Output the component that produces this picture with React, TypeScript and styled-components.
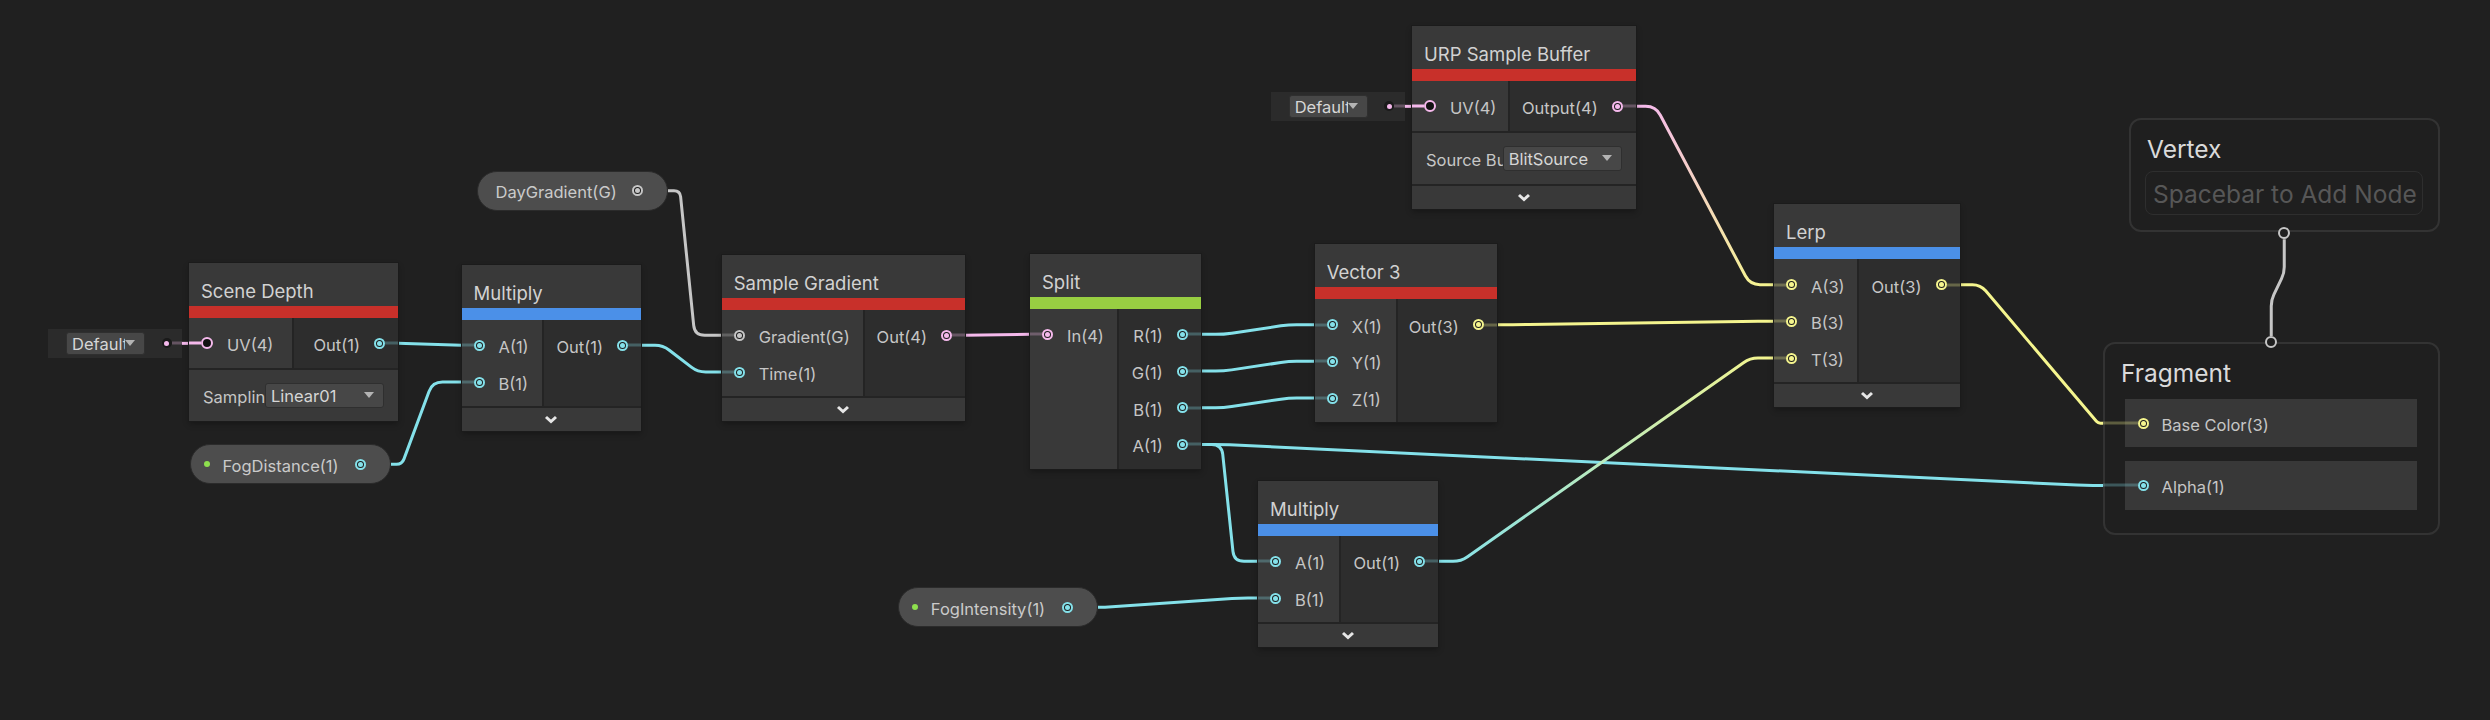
import React from "react";
import styled, { createGlobalStyle } from "styled-components";

const COL = {
  bg: "#202020",
  node: "#393939",
  out: "#2d2d2d",
  seam: "#242424",
  text: "#c6c6c6",
  title: "#d2d2d2",
  red: "#c8302a",
  blue: "#4b90e8",
  green: "#98cf42",
  cyan: "#84e1ea",
  yellow: "#f5f58e",
  pink: "#f5b9ec",
  grey: "#c6c6c6",
};

const dim = (c: string) => c + "4a";

type Pt = [number, number];
type Port = { label: string; color: string; hollow?: boolean; stub?: string };
type NodeDef = {
  x: number;
  y: number;
  w: number;
  inW: number;
  title: string;
  bar: string;
  inputs: Port[];
  outputs: Port[];
  prop?: { label: string; value: string };
  chevron?: boolean;
};

const TITLE_H = 43;
const BAR_H = 12;
const PAD_T = 7;
const ROW_H = 36.7;

const GlobalStyle = createGlobalStyle`
  html, body { margin: 0; padding: 0; background: ${COL.bg}; }
  body { font-family: Inter, "Noto Sans", "Liberation Sans", sans-serif; }
  #root { width: 2490px; height: 720px; }
`;

const Canvas = styled.div`
  position: relative;
  width: 2490px;
  height: 720px;
  overflow: hidden;
  background: ${COL.bg};
`;

const WireLayer = styled.svg`
  position: absolute;
  left: 0;
  top: 0;
  width: 2490px;
  height: 720px;
`;

const NodeFrame = styled.div<{ $x: number; $y: number; $w: number }>`
  position: absolute;
  left: ${(p) => p.$x}px;
  top: ${(p) => p.$y}px;
  width: ${(p) => p.$w}px;
  display: flex;
  flex-direction: column;
  background: ${COL.node};
  box-shadow: 0 0 0 1px #1b1b1b, 0 3px 6px rgba(0, 0, 0, 0.3);
`;

const TitleBar = styled.div`
  height: ${TITLE_H}px;
  box-sizing: border-box;
  padding: 17px 12px 0;
  font-size: 18.5px;
  line-height: 22px;
  color: ${COL.title};
  white-space: nowrap;
  overflow: hidden;
`;

const CategoryStrip = styled.div<{ $c: string }>`
  height: ${BAR_H}px;
  background: ${(p) => p.$c};
`;

const PortGrid = styled.div<{ $inW: number }>`
  display: grid;
  grid-template-columns: ${(p) => p.$inW}px 1fr;
  column-gap: 2px;
  background: ${COL.seam};
`;

const PortColumn = styled.div<{ $out?: boolean }>`
  display: flex;
  flex-direction: column;
  padding: ${PAD_T}px 0 6px;
  background: ${(p) => (p.$out ? COL.out : COL.node)};
`;

const PortRow = styled.div<{ $out?: boolean }>`
  position: relative;
  height: ${ROW_H}px;
  display: flex;
  align-items: center;
  gap: 14px;
  flex-direction: ${(p) => (p.$out ? "row-reverse" : "row")};
  padding: ${(p) => (p.$out ? "0 13px 0 0" : "0 0 0 12px")};
`;

const Socket = styled.span<{ $c: string; $hollow?: boolean }>`
  position: relative;
  flex: none;
  width: ${(p) => (p.$hollow ? 12 : 11)}px;
  height: ${(p) => (p.$hollow ? 12 : 11)}px;
  box-sizing: border-box;
  border-radius: 50%;
  border: 2px solid ${(p) => p.$c};
  background: ${(p) => (p.$hollow ? "#121212" : "#1d1d1d")};
  display: flex;
  align-items: center;
  justify-content: center;
  &::after {
    content: "";
    width: 5px;
    height: 5px;
    border-radius: 50%;
    background: ${(p) => p.$c};
    display: ${(p) => (p.$hollow ? "none" : "block")};
  }
`;

const Stub = styled.span<{ $c: string; $out?: boolean; $len: number; $off?: number }>`
  position: absolute;
  top: 50%;
  height: 3px;
  transform: translateY(-50%);
  ${(p) => (p.$out ? `right: ${-(p.$off ?? 0)}px;` : `left: ${-(p.$off ?? 0)}px;`)}
  width: ${(p) => p.$len}px;
  background: ${(p) => p.$c};
`;

const PortLabel = styled.span`
  font-size: 16.5px;
  line-height: 20px;
  padding-top: 4px;
  color: ${COL.text};
  white-space: nowrap;
`;

const PropRow = styled.div`
  height: 53px;
  box-sizing: border-box;
  border-top: 2px solid ${COL.seam};
  background: ${COL.node};
  display: flex;
  align-items: center;
  padding: 0 14px;
`;

const PropLabel = styled.span`
  flex: 1;
  min-width: 0;
  overflow: hidden;
  white-space: nowrap;
  font-size: 16.5px;
  padding-top: 3px;
  color: ${COL.text};
`;

const Select = styled.div<{ $w: number; $h: number }>`
  flex: none;
  width: ${(p) => p.$w}px;
  height: ${(p) => p.$h}px;
  box-sizing: border-box;
  display: flex;
  align-items: center;
  padding: 0 9px 0 5px;
  background: #474747;
  border: 1px solid #2f2f2f;
  border-radius: 3px;
`;

const SelectText = styled.span`
  flex: 1;
  min-width: 0;
  overflow: hidden;
  white-space: nowrap;
  font-size: 16.5px;
  padding-top: 2px;
  color: #d6d6d6;
`;

const Caret = styled.span`
  flex: none;
  width: 0;
  height: 0;
  border-left: 5px solid transparent;
  border-right: 5px solid transparent;
  border-top: 6px solid #b4b4b4;
`;

const Expander = styled.div`
  height: 25px;
  box-sizing: border-box;
  border-top: 2px solid ${COL.seam};
  background: ${COL.node};
  display: flex;
  align-items: center;
  justify-content: center;
`;

const PropertyPill = styled.div<{ $x: number; $y: number; $w: number; $padL: number }>`
  position: absolute;
  left: ${(p) => p.$x}px;
  top: ${(p) => p.$y}px;
  width: ${(p) => p.$w}px;
  height: 40px;
  box-sizing: border-box;
  border-radius: 20px;
  background: #4d4d4d;
  border: 1px solid #2b2b2b;
  display: flex;
  align-items: center;
  padding: 0 24px 0 ${(p) => p.$padL}px;
`;

const KeywordDot = styled.span`
  flex: none;
  width: 6px;
  height: 6px;
  border-radius: 50%;
  background: #8ee04e;
  margin-right: 13px;
`;

const PillLabel = styled.span`
  font-size: 16.5px;
  padding-top: 3px;
  color: #cacaca;
  white-space: nowrap;
`;

const PillSocket = styled(Socket)`
  margin-left: auto;
`;

const InlineValue = styled.div<{ $x: number; $y: number; $w: number; $padL: number; $padR: number }>`
  position: absolute;
  left: ${(p) => p.$x}px;
  top: ${(p) => p.$y}px;
  width: ${(p) => p.$w}px;
  height: 29px;
  box-sizing: border-box;
  background: #2b2b2b;
  display: flex;
  align-items: center;
  padding: 0 ${(p) => p.$padR}px 0 ${(p) => p.$padL}px;
`;

const ValueDot = styled.span`
  position: relative;
  margin-left: auto;
  flex: none;
  width: 10px;
  height: 10px;
  border-radius: 50%;
  background: #1a1a1a;
  display: flex;
  align-items: center;
  justify-content: center;
  &::after {
    content: "";
    width: 5px;
    height: 5px;
    border-radius: 50%;
    background: ${COL.pink};
  }
`;

const ContextBlock = styled.div<{ $x: number; $y: number; $w: number }>`
  position: absolute;
  left: ${(p) => p.$x}px;
  top: ${(p) => p.$y}px;
  width: ${(p) => p.$w}px;
  box-sizing: border-box;
  border: 2px solid #333333;
  border-radius: 12px;
  background: #1f1f1f;
  display: flex;
  flex-direction: column;
`;

const ContextTitle = styled.div`
  padding: 14px 0 0 16px;
  font-size: 24.5px;
  line-height: 30px;
  color: #dadada;
`;

const Placeholder = styled.div`
  margin: 7px 15px 15px 14px;
  height: 44px;
  box-sizing: border-box;
  border: 1px solid #2e2e2e;
  border-radius: 8px;
  display: flex;
  align-items: center;
  padding: 2px 0 0 7px;
  font-size: 24.5px;
  color: #575757;
  white-space: nowrap;
  overflow: hidden;
`;

const SlotList = styled.div`
  display: flex;
  flex-direction: column;
  gap: 14px;
  padding: 11px 20.5px 23px 20px;
`;

const Slot = styled.div`
  position: relative;
  height: 48.3px;
  background: #383838;
  display: flex;
  align-items: center;
  gap: 13px;
  padding-left: 12.5px;
`;

const FlowPort = styled.span<{ $top?: boolean }>`
  position: absolute;
  left: 50%;
  ${(p) => (p.$top ? "top: -8px;" : "bottom: -9px;")}
  transform: translateX(-50%);
  width: 12px;
  height: 12px;
  box-sizing: border-box;
  border-radius: 50%;
  border: 2px solid ${COL.grey};
  background: #1f1f1f;
`;

const cyanPort = (label: string): Port => ({ label, color: COL.cyan });
const yellowPort = (label: string): Port => ({ label, color: COL.yellow });

const NODES: Record<string, NodeDef> = {
  scene: {
    x: 189, y: 263, w: 209, inW: 103, title: "Scene Depth", bar: COL.red,
    inputs: [{ label: "UV(4)", color: COL.pink, hollow: true, stub: COL.pink }],
    outputs: [cyanPort("Out(1)")],
    prop: { label: "Sampling", value: "Linear01" },
  },
  mul1: {
    x: 461.5, y: 265, w: 179.5, inW: 80.5, title: "Multiply", bar: COL.blue,
    inputs: [cyanPort("A(1)"), cyanPort("B(1)")],
    outputs: [cyanPort("Out(1)")],
    chevron: true,
  },
  sg: {
    x: 721.7, y: 255, w: 243.3, inW: 141, title: "Sample Gradient", bar: COL.red,
    inputs: [{ label: "Gradient(G)", color: COL.grey }, cyanPort("Time(1)")],
    outputs: [{ label: "Out(4)", color: COL.pink }],
    chevron: true,
  },
  split: {
    x: 1030, y: 254, w: 170.7, inW: 87.3, title: "Split", bar: COL.green,
    inputs: [{ label: "In(4)", color: COL.pink }],
    outputs: [cyanPort("R(1)"), cyanPort("G(1)"), cyanPort("B(1)"), cyanPort("A(1)")],
  },
  vec3: {
    x: 1314.7, y: 244.3, w: 182, inW: 81, title: "Vector 3", bar: COL.red,
    inputs: [cyanPort("X(1)"), cyanPort("Y(1)"), cyanPort("Z(1)")],
    outputs: [yellowPort("Out(3)")],
  },
  urp: {
    x: 1412, y: 26, w: 223.7, inW: 95.7, title: "URP Sample Buffer", bar: COL.red,
    inputs: [{ label: "UV(4)", color: COL.pink, hollow: true, stub: COL.pink }],
    outputs: [{ label: "Output(4)", color: COL.pink }],
    prop: { label: "Source Buffer", value: "BlitSource" },
    chevron: true,
  },
  lerp: {
    x: 1774, y: 204.3, w: 185.5, inW: 83, title: "Lerp", bar: COL.blue,
    inputs: [yellowPort("A(3)"), yellowPort("B(3)"), yellowPort("T(3)")],
    outputs: [yellowPort("Out(3)")],
    chevron: true,
  },
  mul2: {
    x: 1258, y: 481, w: 180, inW: 81, title: "Multiply", bar: COL.blue,
    inputs: [cyanPort("A(1)"), cyanPort("B(1)")],
    outputs: [cyanPort("Out(1)")],
    chevron: true,
  },
};

const portY = (n: NodeDef, i: number) => n.y + TITLE_H + BAR_H + PAD_T + ROW_H * (i + 0.5);
const inPt = (n: NodeDef, i: number): Pt => [n.x, portY(n, i)];
const outPt = (n: NodeDef, i: number): Pt => [n.x + n.w, portY(n, i)];
const elbow = (a: Pt, b: Pt, da: number, db: number): Pt[] => [a, [a[0] + da, a[1]], [b[0] - db, b[1]], b];

const FRAG = { x: 2103, y: 342, w: 336.5 };
const VERT = { x: 2129, y: 118.3, w: 310.5 };
const baseColorPt: Pt = [FRAG.x, FRAG.y + 2 + 44 + 11 + 24.15];
const alphaPt: Pt = [FRAG.x, FRAG.y + 2 + 44 + 11 + 48.3 + 14 + 24.15];

const PILLS = {
  day: { x: 476.5, y: 170.7, w: 191.5, label: "DayGradient(G)", color: COL.grey, dot: false, padL: 18 },
  fogD: { x: 189.5, y: 444.3, w: 201.5, label: "FogDistance(1)", color: COL.cyan, dot: true, padL: 13 },
  fogI: { x: 897.8, y: 587.3, w: 200.2, label: "FogIntensity(1)", color: COL.cyan, dot: true, padL: 13 },
};
const pillOut = (p: { x: number; y: number; w: number }): Pt => [p.x + p.w, p.y + 20];

const DEFAULTS = [
  { x: 48, node: "scene" },
  { x: 1270.7, node: "urp" },
];
const DEF_W = 134;

type Wire = { pts: Pt[]; color: string; to?: string; r?: number };

const N = NODES;
const WIRES: Wire[] = [
  { pts: [[48 + DEF_W, portY(N.scene, 0)], inPt(N.scene, 0)], color: COL.pink },
  { pts: [[1270.7 + DEF_W, portY(N.urp, 0)], inPt(N.urp, 0)], color: COL.pink },
  { pts: [outPt(N.scene, 0), inPt(N.mul1, 0)], color: COL.cyan },
  { pts: elbow(pillOut(PILLS.fogD), inPt(N.mul1, 1), 11, 29), color: COL.cyan, r: 10 },
  { pts: elbow(outPt(N.mul1, 0), inPt(N.sg, 1), 22, 24), color: COL.cyan },
  { pts: elbow(pillOut(PILLS.day), inPt(N.sg, 0), 12, 27), color: COL.grey, r: 10 },
  { pts: [outPt(N.sg, 0), inPt(N.split, 0)], color: COL.pink },
  { pts: elbow(outPt(N.split, 0), inPt(N.vec3, 0), 23, 26), color: COL.cyan },
  { pts: elbow(outPt(N.split, 1), inPt(N.vec3, 1), 23, 26), color: COL.cyan },
  { pts: elbow(outPt(N.split, 2), inPt(N.vec3, 2), 23, 26), color: COL.cyan },
  { pts: elbow(outPt(N.split, 3), inPt(N.mul2, 0), 21, 24), color: COL.cyan, r: 10 },
  { pts: elbow(outPt(N.split, 3), alphaPt, 21, 18), color: COL.cyan },
  { pts: elbow(pillOut(PILLS.fogI), inPt(N.mul2, 1), 7, 18), color: COL.cyan },
  { pts: elbow(outPt(N.vec3, 0), inPt(N.lerp, 1), 24, 24), color: COL.yellow },
  { pts: elbow(outPt(N.urp, 0), inPt(N.lerp, 0), 20, 24), color: COL.pink, to: COL.yellow, r: 10 },
  { pts: elbow(outPt(N.mul2, 0), inPt(N.lerp, 2), 23, 24), color: COL.cyan, to: COL.yellow },
  { pts: elbow(outPt(N.lerp, 0), baseColorPt, 21, 5), color: COL.yellow },
  {
    pts: [[VERT.x + VERT.w / 2, 239.3], [VERT.x + VERT.w / 2, 273], [FRAG.x + FRAG.w / 2, 300], [FRAG.x + FRAG.w / 2, 336]],
    color: COL.grey,
    r: 6,
  },
];

function roundPath(pts: Pt[], r: number): string {
  let d = `M ${pts[0][0]} ${pts[0][1]}`;
  for (let i = 1; i < pts.length - 1; i++) {
    const [x0, y0] = pts[i - 1];
    const [x1, y1] = pts[i];
    const [x2, y2] = pts[i + 1];
    const l1 = Math.hypot(x1 - x0, y1 - y0);
    const l2 = Math.hypot(x2 - x1, y2 - y1);
    if (l1 === 0 || l2 === 0) continue;
    const rr = Math.min(r, l1 / 2, l2 / 2);
    const ax = x1 + ((x0 - x1) / l1) * rr;
    const ay = y1 + ((y0 - y1) / l1) * rr;
    const bx = x1 + ((x2 - x1) / l2) * rr;
    const by = y1 + ((y2 - y1) / l2) * rr;
    d += ` L ${ax} ${ay} Q ${x1} ${y1} ${bx} ${by}`;
  }
  const last = pts[pts.length - 1];
  d += ` L ${last[0]} ${last[1]}`;
  return d;
}

function Chevron() {
  return (
    <svg width="14" height="9" viewBox="0 0 14 9">
      <path d="M2 2 L7 6.5 L12 2" stroke="#e6e6e6" strokeWidth="3" fill="none" />
    </svg>
  );
}

function GraphNode({ n }: { n: NodeDef }) {
  return (
    <NodeFrame $x={n.x} $y={n.y} $w={n.w}>
      <TitleBar>{n.title}</TitleBar>
      <CategoryStrip $c={n.bar} />
      <PortGrid $inW={n.inW}>
        <PortColumn>
          {n.inputs.map((p) => (
            <PortRow key={p.label}>
              <Stub $c={p.stub ?? dim(p.color)} $len={12} />
              <Socket $c={p.color} $hollow={p.hollow} />
              <PortLabel>{p.label}</PortLabel>
            </PortRow>
          ))}
        </PortColumn>
        <PortColumn $out>
          {n.outputs.map((p) => (
            <PortRow key={p.label} $out>
              <Stub $c={dim(p.color)} $len={13} $out />
              <Socket $c={p.color} />
              <PortLabel>{p.label}</PortLabel>
            </PortRow>
          ))}
        </PortColumn>
      </PortGrid>
      {n.prop && (
        <PropRow>
          <PropLabel>{n.prop.label}</PropLabel>
          <Select $w={119} $h={25}>
            <SelectText>{n.prop.value}</SelectText>
            <Caret />
          </Select>
        </PropRow>
      )}
      {n.chevron && (
        <Expander>
          <Chevron />
        </Expander>
      )}
    </NodeFrame>
  );
}

function Pill({ p }: { p: (typeof PILLS)[keyof typeof PILLS] }) {
  return (
    <PropertyPill $x={p.x} $y={p.y} $w={p.w} $padL={p.padL}>
      {p.dot && <KeywordDot />}
      <PillLabel>{p.label}</PillLabel>
      <PillSocket $c={p.color} />
    </PropertyPill>
  );
}

function DefaultValue({ x, y }: { x: number; y: number }) {
  return (
    <InlineValue $x={x} $y={y} $w={DEF_W} $padL={18} $padR={10.5}>
      <Select $w={79} $h={23}>
        <SelectText>Default</SelectText>
        <Caret />
      </Select>
      <Stub $c={dim(COL.pink)} $len={10.5} $out />
      <ValueDot />
    </InlineValue>
  );
}

export default function App() {
  return (
    <>
      <GlobalStyle />
      <Canvas>
        <WireLayer viewBox="0 0 2490 720">
          <defs>
            {WIRES.map((w, i) =>
              w.to ? (
                <linearGradient
                  key={i}
                  id={`wg${i}`}
                  gradientUnits="userSpaceOnUse"
                  x1={w.pts[0][0]}
                  y1={w.pts[0][1]}
                  x2={w.pts[w.pts.length - 1][0]}
                  y2={w.pts[w.pts.length - 1][1]}
                >
                  <stop offset="0" stopColor={w.color} />
                  <stop offset="1" stopColor={w.to} />
                </linearGradient>
              ) : null
            )}
          </defs>
          {WIRES.map((w, i) => (
            <path
              key={i}
              d={roundPath(w.pts, w.r ?? 8)}
              stroke={w.to ? `url(#wg${i})` : w.color}
              strokeWidth={3}
              fill="none"
              strokeLinejoin="round"
            />
          ))}
        </WireLayer>

        {DEFAULTS.map((d) => (
          <DefaultValue key={d.node} x={d.x} y={portY(NODES[d.node], 0) - 14.5} />
        ))}

        {Object.entries(NODES).map(([k, n]) => (
          <GraphNode key={k} n={n} />
        ))}

        <Pill p={PILLS.day} />
        <Pill p={PILLS.fogD} />
        <Pill p={PILLS.fogI} />

        <ContextBlock $x={VERT.x} $y={VERT.y} $w={VERT.w}>
          <ContextTitle>Vertex</ContextTitle>
          <Placeholder>Spacebar to Add Node</Placeholder>
          <FlowPort />
        </ContextBlock>

        <ContextBlock $x={FRAG.x} $y={FRAG.y} $w={FRAG.w}>
          <FlowPort $top />
          <ContextTitle>Fragment</ContextTitle>
          <SlotList>
            <Slot>
              <Stub $c={dim(COL.yellow)} $len={34.5} $off={22} />
              <Socket $c={COL.yellow} />
              <PortLabel>Base Color(3)</PortLabel>
            </Slot>
            <Slot>
              <Stub $c={dim(COL.cyan)} $len={34.5} $off={22} />
              <Socket $c={COL.cyan} />
              <PortLabel>Alpha(1)</PortLabel>
            </Slot>
          </SlotList>
        </ContextBlock>
      </Canvas>
    </>
  );
}
